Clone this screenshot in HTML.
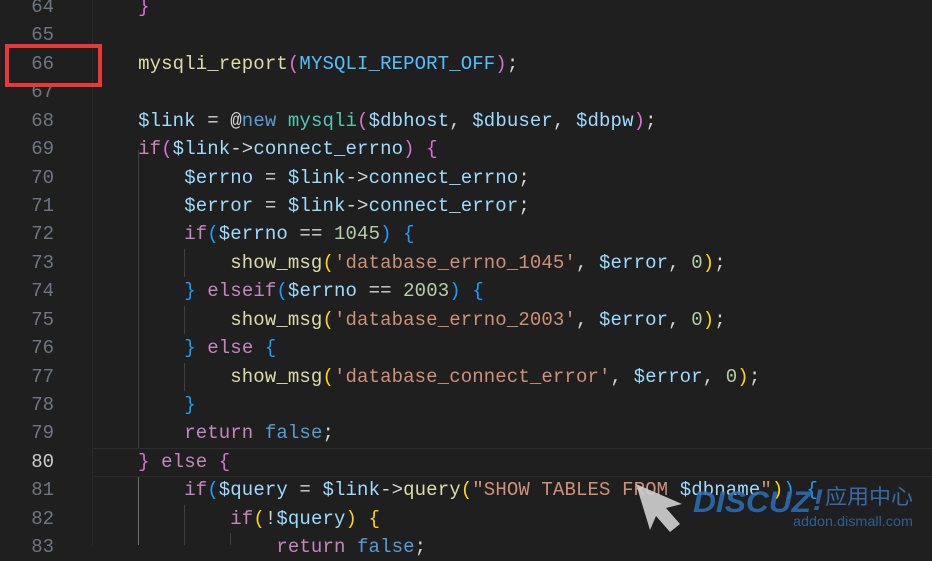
<!DOCTYPE html>
<html><head><meta charset="utf-8"><style>
html,body{margin:0;padding:0;width:932px;height:545px;overflow:hidden;background:#1f1f1f;}
.ed{position:absolute;left:0;top:0;width:932px;height:545px;font-family:"Liberation Mono",monospace;font-size:19px;}
.ln{position:absolute;left:0;width:54px;text-align:right;color:#6e7681;height:28.44px;line-height:28.44px;}
.cl{position:absolute;left:92px;height:28.44px;line-height:28.44px;white-space:pre;color:#d4d4d4;letter-spacing:0.12px;}
.gut{position:absolute;left:92px;top:0;width:1px;height:545px;background:#2b2b2b;}
.g{position:absolute;width:1px;background:#404040;}
.f{color:#dcdcaa}.v{color:#9cdcfe}.k{color:#c586c0}.b{color:#569cd6}.c{color:#4ec9b0}.s{color:#ce9178}.n{color:#b5cea8}.cn{color:#4fc1ff}
.y{color:#ffd700}.p{color:#da70d6}.u{color:#179fff}
</style></head><body><div class="ed">
<div class="gut"></div>
<div style="position:absolute;left:94px;top:448px;width:838px;height:27px;border-top:1px solid #2c2c2c;border-bottom:1px solid #2c2c2c;"></div>
<div class="g" style="left:138px;top:150px;height:298px;"></div>
<div class="g" style="left:138px;top:477px;height:68px;background:#707070"></div>
<div class="g" style="left:184px;top:249px;height:28px;"></div>
<div class="g" style="left:184px;top:306px;height:28px;"></div>
<div class="g" style="left:184px;top:363px;height:28px;"></div>
<div class="g" style="left:184px;top:505px;height:40px;"></div>
<div class="g" style="left:230px;top:533px;height:12px;"></div>

<div class="ln" style="top:-7px">64</div>
<div class="ln" style="top:21px">65</div>
<div class="ln" style="top:50px">66</div>
<div class="ln" style="top:78px">67</div>
<div class="ln" style="top:107px">68</div>
<div class="ln" style="top:135px">69</div>
<div class="ln" style="top:164px">70</div>
<div class="ln" style="top:192px">71</div>
<div class="ln" style="top:220px">72</div>
<div class="ln" style="top:249px">73</div>
<div class="ln" style="top:277px">74</div>
<div class="ln" style="top:306px">75</div>
<div class="ln" style="top:334px">76</div>
<div class="ln" style="top:363px">77</div>
<div class="ln" style="top:391px">78</div>
<div class="ln" style="top:419px">79</div>
<div class="ln" style="top:448px;color:#cccccc">80</div>
<div class="ln" style="top:476px">81</div>
<div class="ln" style="top:505px">82</div>
<div class="ln" style="top:533px">83</div>

<div class="cl" style="top:-7px">    <span class="p">}</span></div>
<div class="cl" style="top:50px">    <span class="f">mysqli_report</span><span class="p">(</span><span class="cn">MYSQLI_REPORT_OFF</span><span class="p">)</span>;</div>
<div class="cl" style="top:107px">    <span class="v">$link</span> = @<span class="b">new</span> <span class="c">mysqli</span><span class="p">(</span><span class="v">$dbhost</span>, <span class="v">$dbuser</span>, <span class="v">$dbpw</span><span class="p">)</span>;</div>
<div class="cl" style="top:135px">    <span class="k">if</span><span class="p">(</span><span class="v">$link</span>-&gt;<span class="v">connect_errno</span><span class="p">)</span> <span class="p">{</span></div>
<div class="cl" style="top:164px">        <span class="v">$errno</span> = <span class="v">$link</span>-&gt;<span class="v">connect_errno</span>;</div>
<div class="cl" style="top:192px">        <span class="v">$error</span> = <span class="v">$link</span>-&gt;<span class="v">connect_error</span>;</div>
<div class="cl" style="top:220px">        <span class="k">if</span><span class="u">(</span><span class="v">$errno</span> == <span class="n">1045</span><span class="u">)</span> <span class="u">{</span></div>
<div class="cl" style="top:249px">            <span class="f">show_msg</span><span class="y">(</span><span class="s">'database_errno_1045'</span>, <span class="v">$error</span>, <span class="n">0</span><span class="y">)</span>;</div>
<div class="cl" style="top:277px">        <span class="u">}</span> <span class="k">elseif</span><span class="u">(</span><span class="v">$errno</span> == <span class="n">2003</span><span class="u">)</span> <span class="u">{</span></div>
<div class="cl" style="top:306px">            <span class="f">show_msg</span><span class="y">(</span><span class="s">'database_errno_2003'</span>, <span class="v">$error</span>, <span class="n">0</span><span class="y">)</span>;</div>
<div class="cl" style="top:334px">        <span class="u">}</span> <span class="k">else</span> <span class="u">{</span></div>
<div class="cl" style="top:363px">            <span class="f">show_msg</span><span class="y">(</span><span class="s">'database_connect_error'</span>, <span class="v">$error</span>, <span class="n">0</span><span class="y">)</span>;</div>
<div class="cl" style="top:391px">        <span class="u">}</span></div>
<div class="cl" style="top:419px">        <span class="k">return</span> <span class="b">false</span>;</div>
<div class="cl" style="top:448px">    <span class="p">}</span> <span class="k">else</span> <span class="p">{</span></div>
<div class="cl" style="top:476px">        <span class="k">if</span><span class="u">(</span><span class="v">$query</span> = <span class="v">$link</span>-&gt;<span class="f">query</span><span class="y">(</span><span class="s">"SHOW TABLES FROM </span><span class="v">$dbname</span><span class="s">"</span><span class="y">)</span><span class="u">)</span> <span class="u">{</span></div>
<div class="cl" style="top:505px">            <span class="k">if</span><span class="y">(</span>!<span class="v">$query</span><span class="y">)</span> <span class="y">{</span></div>
<div class="cl" style="top:533px">                <span class="k">return</span> <span class="b">false</span>;</div>

<div style="position:absolute;left:5px;top:44px;width:97px;height:43px;box-sizing:border-box;border:4px solid #e8383a;"></div>

<svg style="position:absolute;left:620px;top:470px" width="312" height="75">
<polygon points="16,14 62,34 46,38 60,54 50,62 36,46 30,60" fill="#d0d0d0" opacity="0.9"/>
<text x="73" y="42" font-family="Liberation Sans,sans-serif" font-size="30" font-style="italic" font-weight="bold" fill="#2d6fb8" opacity="0.85" textLength="118" lengthAdjust="spacingAndGlyphs">DISCUZ</text>
<text x="193" y="40" font-family="Liberation Sans,sans-serif" font-size="30" font-style="italic" font-weight="bold" fill="#2d6fb8" opacity="0.85">!</text>
<text x="205" y="34" font-family="Noto Sans CJK SC,sans-serif" font-size="21" fill="#3a78c0" opacity="0.85" textLength="88" lengthAdjust="spacingAndGlyphs">应用中心</text>
<text x="173" y="56" font-family="Liberation Sans,sans-serif" font-size="14" fill="#2f6aa8" opacity="0.85" textLength="120" lengthAdjust="spacingAndGlyphs">addon.dismall.com</text>
</svg>
</div></body></html>
